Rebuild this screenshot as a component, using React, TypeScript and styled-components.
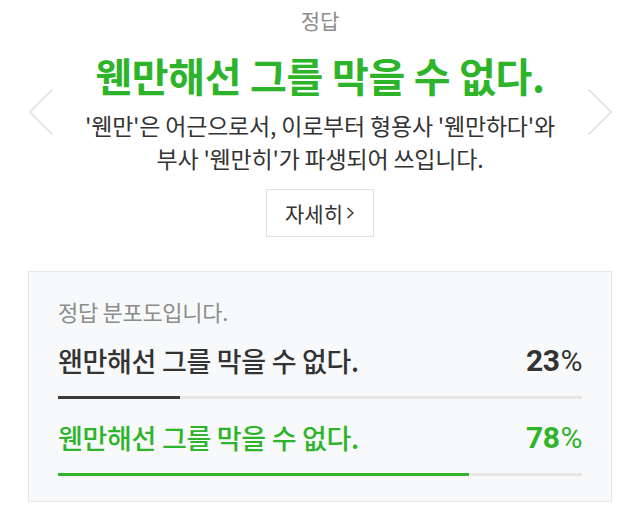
import React from "react";
import styled, { createGlobalStyle } from "styled-components";

const GlobalStyle = createGlobalStyle`
  html, body {
    margin: 0;
    padding: 0;
    background: #ffffff;
  }
  body {
    font-family: "Noto Sans CJK KR", "Noto Sans", sans-serif;
    color: #333333;
  }
`;

const Page = styled.div`
  width: 640px;
  height: 521px;
  overflow: hidden;
  display: flex;
  flex-direction: column;
  align-items: center;
`;

const Answer = styled.section`
  position: relative;
  width: 640px;
  display: flex;
  flex-direction: column;
  align-items: center;
`;

const Label = styled.div`
  margin-top: 6px;
  font-size: 21px;
  line-height: 28px;
  color: #8c8c8c;
`;

const Title = styled.h1`
  margin: 15px 0 0;
  font-size: 40px;
  line-height: 52px;
  font-weight: 700;
  color: #2db42a;
  letter-spacing: -0.3px;
`;

const Description = styled.p`
  margin: 8px 0 0;
  font-size: 23px;
  line-height: 33px;
  color: #333333;
  text-align: center;
  letter-spacing: -0.2px;
`;

const MoreButton = styled.button`
  margin-top: 14px;
  width: 108px;
  height: 48px;
  box-sizing: border-box;
  border: 1px solid #e0e0e0;
  background: #ffffff;
  font-family: inherit;
  font-size: 21px;
  color: #333333;
  display: flex;
  align-items: center;
  justify-content: center;
  gap: 3px;
  padding: 0;
`;

const NavArrow = styled.div<{ $side: "left" | "right" }>`
  position: absolute;
  top: 89px;
  ${(p) => (p.$side === "left" ? "left: 29px;" : "left: 588px;")}
  width: 24px;
  height: 46px;
  display: flex;
`;

const Stats = styled.section`
  margin-top: 34px;
  width: 584px;
  height: 231px;
  box-sizing: border-box;
  border: 1px solid #e4e6e8;
  background: #f8f9fa;
  padding: 25px 29px 0 29px;
  display: flex;
  flex-direction: column;
`;

const Caption = styled.div`
  font-size: 22px;
  line-height: 28px;
  color: #8c8c8c;
  letter-spacing: -0.3px;
`;

const Option = styled.div<{ $first?: boolean }>`
  margin-top: ${(p) => (p.$first ? "16px" : "19px")};
  display: flex;
  flex-direction: column;
`;

const OptionHead = styled.div<{ $correct?: boolean }>`
  display: flex;
  justify-content: space-between;
  align-items: center;
  height: 38px;
  color: ${(p) => (p.$correct ? "#2db42a" : "#333333")};
`;

const OptionText = styled.span`
  font-size: 27px;
  font-weight: 500;
  letter-spacing: -0.3px;
`;

const Percent = styled.span`
  font-family: Roboto, "Liberation Sans", sans-serif;
  font-size: 30px;
  font-weight: 700;
  letter-spacing: -0.5px;
`;

const PercentSign = styled.span`
  font-weight: 400;
  margin-left: 1px;
`;

const Track = styled.div`
  margin-top: 17px;
  height: 3px;
  background: #e6e6e6;
  display: flex;
`;

const Fill = styled.div<{ $correct?: boolean }>`
  height: 100%;
  background: ${(p) => (p.$correct ? "#2db42a" : "#3a3a3a")};
`;

const Chevron = ({ dir }: { dir: "left" | "right" }) => (
  <svg width="24" height="46" viewBox="0 0 24 46">
    <polyline
      points={dir === "left" ? "23.5,0.5 0.8,23 23.5,45.5" : "0.5,0.5 23.2,23 0.5,45.5"}
      fill="none"
      stroke="#dcdcdc"
      strokeWidth="1.4"
    />
  </svg>
);

const options = [
  { text: "왠만해선 그를 막을 수 없다.", pct: 23, fill: 23.2, correct: false },
  { text: "웬만해선 그를 막을 수 없다.", pct: 78, fill: 78.5, correct: true },
];

export default function App() {
  return (
    <>
      <GlobalStyle />
      <Page>
        <Answer>
          <Label>정답</Label>
          <Title>웬만해선 그를 막을 수 없다.</Title>
          <Description>
            '웬만'은 어근으로서, 이로부터 형용사 '웬만하다'와
            <br />
            부사 '웬만히'가 파생되어 쓰입니다.
          </Description>
          <MoreButton>
            자세히
            <svg width="9" height="14" viewBox="0 0 9 14">
              <polyline points="1.5,2 7,7 1.5,12" fill="none" stroke="#333" strokeWidth="1.4" />
            </svg>
          </MoreButton>
          <NavArrow $side="left">
            <Chevron dir="left" />
          </NavArrow>
          <NavArrow $side="right">
            <Chevron dir="right" />
          </NavArrow>
        </Answer>
        <Stats>
          <Caption>정답 분포도입니다.</Caption>
          {options.map((o, i) => (
            <Option key={i} $first={i === 0}>
              <OptionHead $correct={o.correct}>
                <OptionText>{o.text}</OptionText>
                <Percent>
                  {o.pct}
                  <PercentSign>%</PercentSign>
                </Percent>
              </OptionHead>
              <Track>
                <Fill $correct={o.correct} style={{ width: `${o.fill}%` }} />
              </Track>
            </Option>
          ))}
        </Stats>
      </Page>
    </>
  );
}
